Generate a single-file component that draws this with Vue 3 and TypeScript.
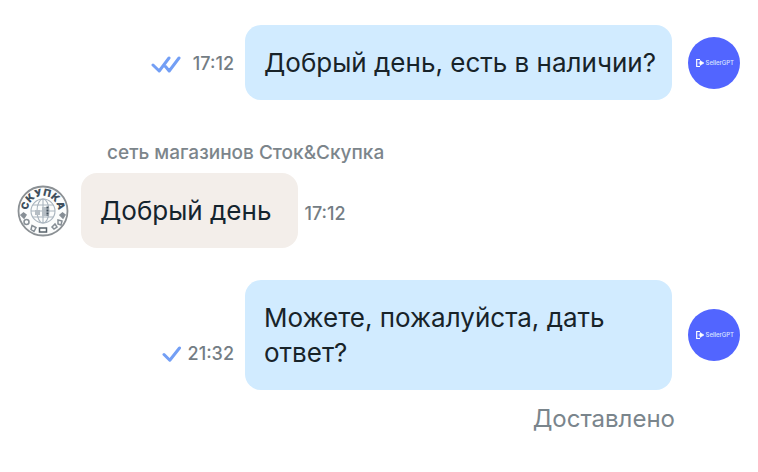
<script setup lang="ts">
interface Message {
  id: number
  own: boolean
  text: string
  time: string
  ticks: number
  author?: string
  status?: string
}

const messages: Message[] = [
  { id: 1, own: true, text: 'Добрый день, есть в наличии?', time: '17:12', ticks: 2 },
  { id: 2, own: false, text: 'Добрый день', time: '17:12', ticks: 0, author: 'сеть магазинов Сток&Скупка' },
  { id: 3, own: true, text: 'Можете, пожалуйста, дать ответ?', time: '21:32', ticks: 1, status: 'Доставлено' },
]
</script>

<template>
  <main class="chat">
    <article v-for="m in messages" :key="m.id" class="message" :class="{ own: m.own }">
      <div v-if="m.author" class="author">{{ m.author }}</div>
      <div class="row">
        <div v-if="m.own" class="meta">
          <svg v-if="m.ticks === 2" class="double" width="30" height="18" viewBox="0 0 30 18" aria-hidden="true">
            <path d="M2 10 8.200 16 18 3M14.500 11.500 18.200 16 28 3" />
          </svg>
          <svg v-else width="20" height="18" viewBox="0 0 20 18" aria-hidden="true">
            <path d="M2 9.500 7.800 15.200 17.500 3" />
          </svg>
          <time>{{ m.time }}</time>
        </div>

        <svg v-if="!m.own" class="avatar" viewBox="0 0 52 52" aria-hidden="true">
          <defs>
            <path id="ring-top" d="M11.300 29A15 15 0 1 1 40.700 29" />
          </defs>
          <circle cx="26" cy="26" r="24.500" fill="#fbfcfc" stroke="#8b9094" stroke-width="1.800" />
          <g fill="none" stroke="#a9b4be" stroke-width="1.100">
            <circle cx="26" cy="26" r="12" />
            <ellipse cx="26" cy="26" rx="6" ry="12" />
            <path d="M14 26h24M16 20h20M16 32h20M26 14v24" />
          </g>
          <path d="M18 25h5v5h-5zM25 22h7v9h-7z" fill="#b5bdc4" />
          <path d="M30.500 21.500v9.500" stroke="#43515c" stroke-width="2" stroke-dasharray="2 1" />
          <text class="seal"><textPath href="#ring-top" startOffset="50%" text-anchor="middle">СКУПКА</textPath></text>
          <g fill="none" stroke="#868e95" stroke-width="1.500">
            <path d="M4 30l2.500-2 2.500 2-2 3zM43 30l2.500-2 2.500 2-2 3z" fill="#868e95" />
            <circle cx="9.500" cy="37" r="2.500" />
            <path d="M15 40.500l4 2-2 4-3-2zM35 42l3-3 2 3-3 2zM41 35l4 1-1 4-3-1z" />
            <path d="M22.500 43h7v4h-7z" stroke="#59636b" />
          </g>
        </svg>

        <p class="bubble">{{ m.text }}</p>

        <time v-if="!m.own" class="meta">{{ m.time }}</time>

        <svg v-if="m.own" class="avatar" viewBox="0 0 52 52" aria-hidden="true">
          <circle cx="26" cy="26" r="26" fill="#5265ff" />
          <path d="M12 22.500H8.700v7H12M10.500 26h2" fill="none" stroke="#fff" stroke-width="1.200" />
          <path d="M12 23.500v5L16 26z" fill="#fff" stroke="#fff" stroke-width=".5" />
          <text class="brand" x="17.500" y="28">SellerGPT</text>
        </svg>
      </div>
      <div v-if="m.status" class="status">{{ m.status }}</div>
    </article>
  </main>
</template>

<style>
body {
  margin: 0;
  background: #fff;
}
</style>

<style scoped>
.chat {
  display: flex;
  flex-direction: column;
  gap: 32px;
  padding: 25px 18px 25px 17px;
  font-family: Inter, "Noto Sans", sans-serif;
}

.message:first-child {
  margin-bottom: 8px;
}

.row {
  display: flex;
  align-items: center;
  gap: 12px;
}

.own .row {
  justify-content: flex-end;
  gap: 16px;
}

.bubble {
  box-sizing: border-box;
  margin: 0;
  padding: 20px 27px 20px 19px;
  border-radius: 16px;
  background: #f3eeea;
  color: #14242e;
  font-size: 26px;
  line-height: 35px;
}

.own .bubble {
  flex: 0 1 427px;
  padding: 20px 14px 20px 19px;
  background: #d1ebff;
  color: #182329;
}

.meta {
  display: flex;
  align-items: center;
  align-self: flex-end;
  gap: 6px;
  margin-bottom: 24px;
  color: #747d84;
  font-size: 18px;
  font-weight: 500;
  line-height: 24px;
}

.row > time.meta {
  margin-bottom: 22px;
  margin-left: -6px;
}

.own .meta {
  margin-right: -5px;
}

.meta svg {
  fill: none;
  stroke: #739ff5;
  stroke-width: 3;
  stroke-linecap: round;
  stroke-linejoin: round;
}

.meta .double {
  margin-right: 6px;
}

.avatar {
  flex: none;
  width: 52px;
  height: 52px;
  overflow: visible;
}

.seal {
  fill: #3f505e;
  font-size: 10px;
  font-weight: 900;
}

.brand {
  fill: #dce5ff;
  font-size: 6px;
  font-weight: 500;
}

.author {
  padding: 0 0 7px 90px;
  color: #7c858b;
  font-size: 19px;
  font-weight: 500;
  line-height: 26px;
}

.status {
  padding: 12px 65px 0 0;
  color: #7a858c;
  font-size: 24px;
  line-height: 34px;
  text-align: right;
}
</style>
